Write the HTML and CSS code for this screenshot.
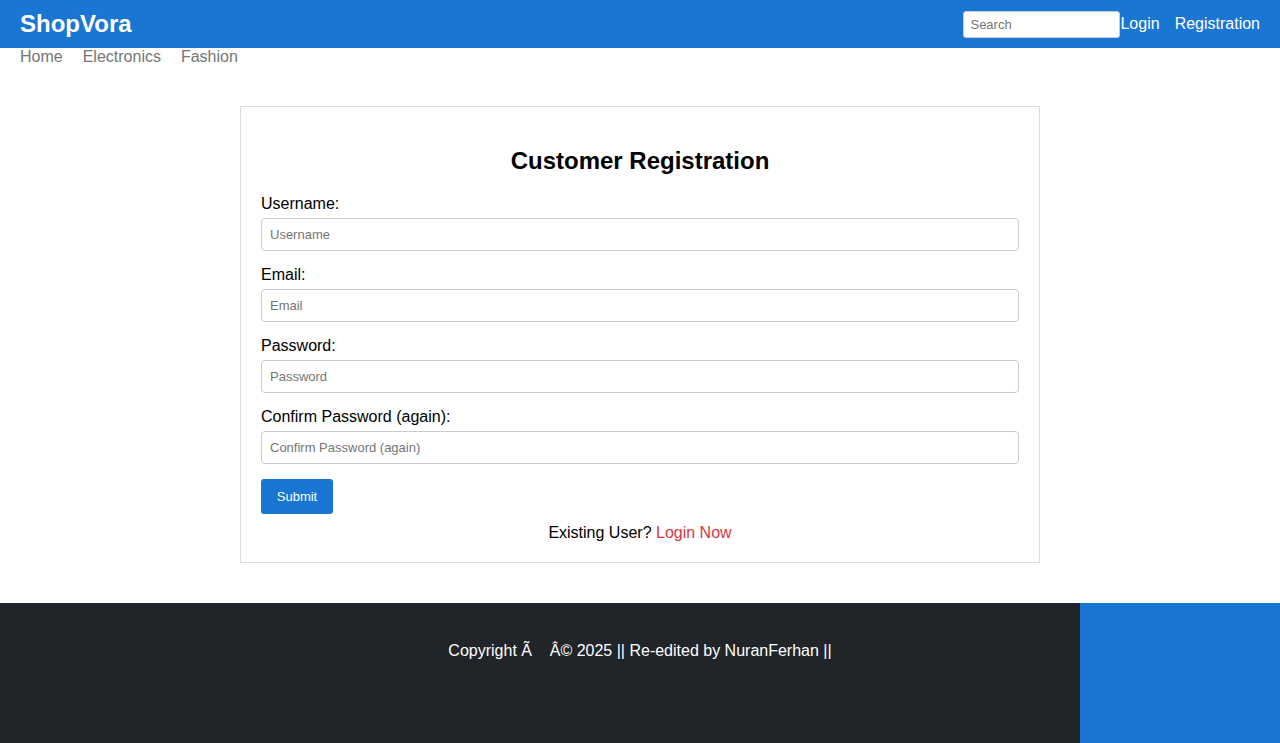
FILE: index.html
```html
<!DOCTYPE html>
<html lang="en">
<head>
<meta charset="utf-8">
<title>ShopVora - Registration</title>
<link rel="stylesheet" href="styles.css">
</head>
<body>
<header class="topbar">
  <a class="brand" href="#">ShopVora</a>
  <div class="topbar-right">
    <input class="search" type="text" placeholder="Search">
    <a class="top-link" href="#">Login</a>
    <a class="top-link" href="#">Registration</a>
  </div>
</header>
<nav class="subnav">
  <a href="#">Home</a>
  <a href="#">Electronics</a>
  <a href="#">Fashion</a>
</nav>
<main class="main">
  <section class="card">
    <h2 class="card-title">Customer Registration</h2>
    <form class="form">
      <div class="field">
        <label>Username:</label>
        <input type="text" placeholder="Username">
      </div>
      <div class="field">
        <label>Email:</label>
        <input type="email" placeholder="Email">
      </div>
      <div class="field">
        <label>Password:</label>
        <input type="password" placeholder="Password">
      </div>
      <div class="field">
        <label>Confirm Password (again):</label>
        <input type="password" placeholder="Confirm Password (again)">
      </div>
      <button class="submit" type="button">Submit</button>
    </form>
    <p class="existing">Existing User? <a href="#">Login Now</a></p>
  </section>
</main>
<footer class="footer">
  <div class="footer-dark">Copyright Ã&nbsp;&nbsp;&nbsp;&nbsp;Â© 2025 || Re-edited by NuranFerhan ||</div>
  <div class="footer-blue"></div>
</footer>
</body>
</html>
```
FILE: styles.css
```css
* { box-sizing: border-box; }
html, body {
  margin: 0;
  padding: 0;
  font-family: "Liberation Sans", Arial, sans-serif;
  font-size: 16px;
  color: #000;
  background: #fff;
}
a { text-decoration: none; }

.topbar {
  height: 48px;
  background: #1976d2;
  display: flex;
  align-items: center;
  justify-content: space-between;
  padding: 0 20px;
}
.brand {
  color: #fff;
  font-weight: bold;
  font-size: 24px;
}
.topbar-right {
  display: flex;
  align-items: center;
  gap: 15px;
}
.search {
  width: 157px;
  height: 27px;
  border: 1px solid #ccc;
  border-radius: 3px;
  padding: 0 6px;
  font-family: "Liberation Sans", Arial, sans-serif;
  font-size: 13px;
  margin-right: -15px;
}
.search::placeholder { color: #757575; }
.top-link {
  color: #fff;
  font-size: 16px;
}

.subnav {
  display: flex;
  gap: 20px;
  padding: 0 20px;
  height: 18px;
  line-height: 18px;
}
.subnav a {
  color: #757575;
  font-size: 16px;
}

.main {
  padding: 40px 0;
  display: flex;
  justify-content: center;
}
.card {
  width: 800px;
  border: 1px solid #ddd;
  padding: 20px;
}
.card-title {
  margin: 20px 0;
  text-align: center;
  font-size: 24px;
  line-height: 28px;
  font-weight: bold;
}
.form {
  display: flex;
  flex-direction: column;
  align-items: flex-start;
}
.field {
  width: 100%;
  display: flex;
  flex-direction: column;
  margin-bottom: 15px;
}
.field label {
  font-size: 16px;
  line-height: 18px;
  margin-bottom: 5px;
}
.field input {
  width: 100%;
  height: 33px;
  border: 1px solid #ccc;
  border-radius: 4px;
  padding: 0 8px;
  font-family: "Liberation Sans", Arial, sans-serif;
  font-size: 13px;
}
.field input::placeholder { color: #757575; }
.submit {
  width: 72px;
  height: 35px;
  border: none;
  border-radius: 3px;
  background: #1976d2;
  color: #fff;
  font-family: "Liberation Sans", Arial, sans-serif;
  font-size: 13px;
}
.existing {
  margin: 10px 0 0;
  text-align: center;
  line-height: 18px;
}
.existing a { color: #dc3545; }

.footer {
  display: flex;
  height: 140px;
}
.footer-dark {
  flex: 1;
  background: #212529;
  color: #fff;
  text-align: center;
  padding: 39px 0 0 200px;
  font-size: 16px;
  line-height: 18px;
}
.footer-blue {
  width: 200px;
  background: #1976d2;
}
```
